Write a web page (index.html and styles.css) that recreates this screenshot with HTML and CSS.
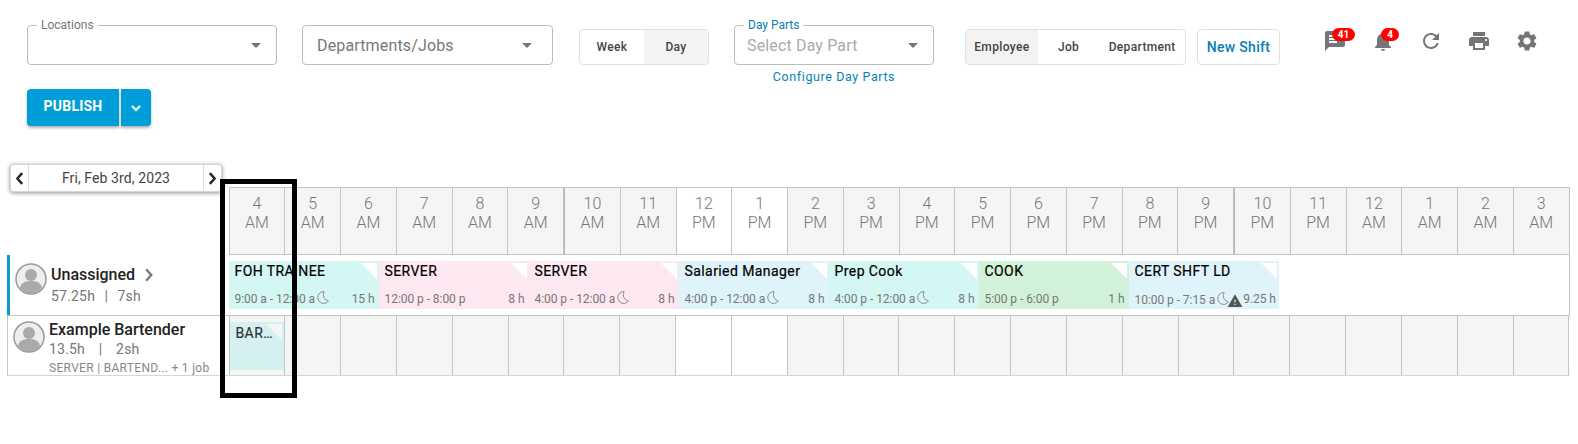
FILE: index.html
```html
<!DOCTYPE html>
<html lang="en">
<head>
<meta charset="utf-8">
<title>Schedule</title>
<link rel="stylesheet" href="styles.css">
</head>
<body>
<div class="page">
  <header class="toolbar">
    <div class="select sel-loc"><span class="legend">Locations</span><span class="caret"></span></div>
    <div class="select sel-dept"><span class="placeholder dark">Departments/Jobs</span><span class="caret"></span></div>
    <div class="seg seg-view"><span class="seg-item wk">Week</span><span class="seg-item on dy">Day</span></div>
    <div class="daypart">
      <div class="select sel-part"><span class="legend blue">Day Parts</span><span class="placeholder">Select Day Part</span><span class="caret"></span></div>
      <a class="config">Configure Day Parts</a>
    </div>
    <div class="seg seg-group"><span class="seg-item on em">Employee</span><span class="seg-item jb">Job</span><span class="seg-item dp">Department</span></div>
    <div class="seg new-shift">New Shift</div>
    <div class="icons">
      <span class="ico"><svg viewBox="0 0 24 24"><path d="M20 2H4c-1.1 0-1.99.9-1.99 2L2 22l4-4h14c1.1 0 2-.9 2-2V4c0-1.1-.9-2-2-2zM6 9h12v2H6V9zm8 5H6v-2h8v2zm4-6H6V6h12v2z"/></svg><b class="badge b-msg">41</b></span>
      <span class="ico"><svg viewBox="0 0 24 24"><path d="M12 22c1.1 0 2-.9 2-2h-4c0 1.1.89 2 2 2zm6-6v-5c0-3.07-1.64-5.64-4.5-6.32V4c0-.83-.67-1.5-1.5-1.5s-1.5.67-1.5 1.5v.68C7.63 5.36 6 7.92 6 11v5l-2 2v1h16v-1l-2-2z"/></svg><b class="badge b-bell">4</b></span>
      <span class="ico"><svg viewBox="0 0 24 24"><path d="M17.65 6.35C16.2 4.9 14.21 4 12 4c-4.42 0-7.99 3.58-7.99 8s3.57 8 7.99 8c3.73 0 6.84-2.55 7.73-6h-2.08c-.82 2.33-3.04 4-5.65 4-3.31 0-6-2.69-6-6s2.69-6 6-6c1.66 0 3.14.69 4.22 1.78L13 11h7V4l-2.35 2.35z"/></svg></span>
      <span class="ico"><svg viewBox="0 0 24 24"><path d="M19 8H5c-1.66 0-3 1.34-3 3v6h4v4h12v-4h4v-6c0-1.66-1.34-3-3-3zm-3 11H8v-5h8v5zm3-7c-.55 0-1-.45-1-1s.45-1 1-1 1 .45 1 1-.45 1-1 1zm-1-9H6v4h12V3z"/></svg></span>
      <span class="ico"><svg viewBox="0 0 24 24"><path d="M19.14 12.94c.04-.3.06-.61.06-.94 0-.32-.02-.64-.07-.94l2.03-1.58c.18-.14.23-.41.12-.61l-1.92-3.32c-.12-.22-.37-.29-.59-.22l-2.39.96c-.5-.38-1.03-.7-1.62-.94l-.36-2.54c-.04-.24-.24-.41-.48-.41h-3.84c-.24 0-.43.17-.47.41l-.36 2.54c-.59.24-1.13.57-1.62.94l-2.39-.96c-.22-.08-.47 0-.59.22L2.74 8.87c-.12.21-.08.47.12.61l2.03 1.58c-.05.3-.09.63-.09.94s.02.64.07.94l-2.03 1.58c-.18.14-.23.41-.12.61l1.92 3.32c.12.22.37.29.59.22l2.39-.96c.5.38 1.03.7 1.62.94l.36 2.54c.05.24.24.41.48.41h3.84c.24 0 .44-.17.47-.41l.36-2.54c.59-.24 1.13-.56 1.62-.94l2.39.96c.22.08.47 0 .59-.22l1.92-3.32c.12-.22.07-.47-.12-.61l-2.01-1.58zM12 15.6c-1.98 0-3.6-1.62-3.6-3.6s1.62-3.6 3.6-3.6 3.6 1.62 3.6 3.6-1.62 3.6-3.6 3.6z"/></svg></span>
    </div>
  </header>

  <div class="publish">
    <button class="pub-main">PUBLISH</button>
    <button class="pub-more"><svg viewBox="0 0 12 12"><path d="M2.500 4.200 6 7.700l3.500-3.500" fill="none" stroke="#fff" stroke-width="1.8"/></svg></button>
  </div>

  <section class="sched">
    <div class="row head">
      <div class="side side-head">
        <div class="datenav">
          <span class="nav-btn"><svg viewBox="0 0 10 14"><path d="M7.500 2 3 7l4.500 5" fill="none" stroke="#222" stroke-width="2.200"/></svg></span>
          <span class="nav-date">Fri, Feb 3rd, 2023</span>
          <span class="nav-btn"><svg viewBox="0 0 10 14"><path d="M2.500 2 7 7l-4.500 5" fill="none" stroke="#222" stroke-width="2.200"/></svg></span>
        </div>
      </div>
      <div class="cells">
        <div class="hc">4<br>AM</div><div class="hc">5<br>AM</div><div class="hc">6<br>AM</div><div class="hc">7<br>AM</div><div class="hc">8<br>AM</div><div class="hc">9<br>AM</div>
        <div class="hc thick">10<br>AM</div><div class="hc">11<br>AM</div><div class="hc open">12<br>PM</div><div class="hc open">1<br>PM</div><div class="hc">2<br>PM</div><div class="hc">3<br>PM</div>
        <div class="hc">4<br>PM</div><div class="hc">5<br>PM</div><div class="hc">6<br>PM</div><div class="hc">7<br>PM</div><div class="hc">8<br>PM</div><div class="hc">9<br>PM</div>
        <div class="hc thick">10<br>PM</div><div class="hc">11<br>PM</div><div class="hc">12<br>AM</div><div class="hc">1<br>AM</div><div class="hc">2<br>AM</div><div class="hc">3<br>AM</div>
      </div>
    </div>

    <div class="row unassigned">
      <div class="side side-un">
        <svg class="avatar" viewBox="0 0 32 32"><circle cx="16" cy="16" r="15" fill="#eee" stroke="#999" stroke-width="1.500"/><circle cx="16" cy="12" r="6" fill="#aaa"/><path d="M5 25c1-6 6-7 11-7s10 1 11 7c-3 3.500-7 5.500-11 5.500S8 28.500 5 25z" fill="#aaa"/></svg>
        <div class="who">
          <div class="name">Unassigned <svg class="chev" viewBox="0 0 10 14"><path d="M2.500 2 7 7l-4.500 5" fill="none" stroke="#777" stroke-width="2"/></svg></div>
          <div class="hours">57.25h &nbsp;|&nbsp; 7sh</div>
        </div>
      </div>
      <div class="shifts">
        <div class="shift teal"><div class="t">FOH TRAINEE</div><div class="m"><span class="time">9:00 a - 12:00 a<svg class="moon" viewBox="0 0 14 14"><path d="M8.500 1.500a5.500 5.500 0 1 0 4 8.800A6 6 0 0 1 8.500 1.500z"/></svg></span><span>15 h</span></div></div>
        <div class="shift pink"><div class="t">SERVER</div><div class="m"><span class="time">12:00 p - 8:00 p</span><span>8 h</span></div></div>
        <div class="shift pink"><div class="t">SERVER</div><div class="m"><span class="time">4:00 p - 12:00 a<svg class="moon" viewBox="0 0 14 14"><path d="M8.500 1.500a5.500 5.500 0 1 0 4 8.800A6 6 0 0 1 8.500 1.500z"/></svg></span><span>8 h</span></div></div>
        <div class="shift blue-s"><div class="t">Salaried Manager</div><div class="m"><span class="time">4:00 p - 12:00 a<svg class="moon" viewBox="0 0 14 14"><path d="M8.500 1.500a5.500 5.500 0 1 0 4 8.800A6 6 0 0 1 8.500 1.500z"/></svg></span><span>8 h</span></div></div>
        <div class="shift teal"><div class="t">Prep Cook</div><div class="m"><span class="time">4:00 p - 12:00 a<svg class="moon" viewBox="0 0 14 14"><path d="M8.500 1.500a5.500 5.500 0 1 0 4 8.800A6 6 0 0 1 8.500 1.500z"/></svg></span><span>8 h</span></div></div>
        <div class="shift green"><div class="t">COOK</div><div class="m"><span class="time">5:00 p - 6:00 p</span><span>1 h</span></div></div>
        <div class="shift blue-s"><div class="t">CERT SHFT LD</div><div class="m"><span class="time">10:00 p - 7:15 a<svg class="moon" viewBox="0 0 14 14"><path d="M8.500 1.500a5.500 5.500 0 1 0 4 8.800A6 6 0 0 1 8.500 1.500z"/></svg><svg class="warn" viewBox="0 0 24 24"><path d="M1 21h22L12 2 1 21zm12-3h-2v-2h2v2zm0-4h-2v-4h2v4z"/></svg></span><span>9.25 h</span></div></div>
      </div>
    </div>

    <div class="row emp">
      <div class="side side-emp">
        <svg class="avatar" viewBox="0 0 32 32"><circle cx="16" cy="16" r="15" fill="#eee" stroke="#999" stroke-width="1.500"/><circle cx="16" cy="12" r="6" fill="#aaa"/><path d="M5 25c1-6 6-7 11-7s10 1 11 7c-3 3.500-7 5.500-11 5.500S8 28.500 5 25z" fill="#aaa"/></svg>
        <div class="who">
          <div class="name">Example Bartender</div>
          <div class="hours">13.5h &nbsp;&nbsp;|&nbsp;&nbsp; 2sh</div>
          <div class="jobs">SERVER | BARTEND... + 1 job</div>
        </div>
      </div>
      <div class="cells">
        <div class="c"><div class="mini"><span>BAR…</span></div></div><div class="c"></div><div class="c"></div><div class="c"></div><div class="c"></div><div class="c"></div>
        <div class="c"></div><div class="c"></div><div class="c open"></div><div class="c open"></div><div class="c"></div><div class="c"></div>
        <div class="c"></div><div class="c"></div><div class="c"></div><div class="c"></div><div class="c"></div><div class="c"></div>
        <div class="c"></div><div class="c"></div><div class="c"></div><div class="c"></div><div class="c"></div><div class="c"></div>
      </div>
    </div>
  </section>
  <div class="annot"></div>
</div>
</body>
</html>
```
FILE: styles.css
```css
* { box-sizing: border-box; }
html, body { margin: 0; padding: 0; background: #fff; }
body { font-family: Roboto, "Liberation Sans", sans-serif; color: #333; overflow: hidden; }
.page { position: relative; width: 1578px; height: 444px; padding-top: 25px; }

.toolbar { display: flex; align-items: flex-start; height: 64px; padding-left: 27px; }
.select { position: relative; display: flex; align-items: center; height: 40px; border: 1px solid #bdbdbd; border-radius: 4px; background: #fff; padding-left: 14px; }
.sel-loc { width: 250px; }
.sel-dept { width: 251px; margin-left: 25px; }
.sel-part { width: 200px; padding-left: 12px; }
.legend { position: absolute; left: 9px; top: -8px; padding: 0 4px; background: #fff; font-size: 12px; line-height: 14px; color: #777; font-weight: 400; }
.legend.blue { color: #0a7fb5; left: 9px; }
.placeholder { font-size: 16px; letter-spacing: .15px; color: #aaa; }
.placeholder.dark { color: #777; }
.caret { position: absolute; right: 15px; top: 17px; width: 0; height: 0; border-left: 5px solid transparent; border-right: 5px solid transparent; border-top: 5px solid #757575; }
.sel-dept .caret { right: 20px; }

.seg { display: flex; height: 36px; margin-top: 4px; border: 1px solid #e0e0e0; border-radius: 4px; overflow: hidden; font-size: 12px; font-weight: 500; letter-spacing: .35px; color: #444; }
.seg-item { display: flex; align-items: center; justify-content: center; }
.seg-item.on { background: #f3f3f3; }
.seg-view { width: 130px; margin-left: 26px; }
.wk { width: 64px; }
.dy { width: 64px; }
.daypart { display: flex; flex-direction: column; align-items: center; width: 200px; margin-left: 25px; }
.config { margin-top: 4px; font-size: 12.500px; line-height: 15px; letter-spacing: .6px; color: #0a7fb5; }
.seg-group { width: 221px; margin-left: 31px; }
.em { width: 72px; }
.jb { width: 62px; }
.dp { width: 86px; }
.new-shift { width: 83px; margin-left: 11px; align-items: center; justify-content: center; font-size: 14px; letter-spacing: .3px; color: #0a7fb5; }

.icons { display: flex; gap: 24px; margin-left: 43px; margin-top: 4px; }
.ico { position: relative; width: 24px; height: 24px; }
.ico svg { display: block; width: 24px; height: 24px; fill: #757575; }
.badge { position: absolute; top: -1px; height: 13px; border-radius: 7px; background: #f00; color: #fff; font-size: 10px; font-weight: 700; line-height: 13px; text-align: center; }
.b-msg { left: 9px; width: 23px; }
.b-bell { left: 10px; width: 18px; }

.publish { display: flex; gap: 2px; padding-left: 27px; height: 37px; }
.publish button { border: 0; border-radius: 0; background: #009ed8; color: #fff; box-shadow: 0 2px 3px rgba(0,0,0,.3); padding: 0; font-family: inherit; }
.pub-main { width: 92px; font-size: 14px; font-weight: 700; letter-spacing: .2px; padding-bottom: 3px !important; border-top-left-radius: 4px !important; border-bottom-left-radius: 4px !important; }
.pub-more { width: 30px; display: flex; align-items: center; justify-content: center; border-top-right-radius: 4px !important; border-bottom-right-radius: 4px !important; }
.pub-more svg { width: 14px; height: 14px; }

.sched { margin: 61px 0 0 7px; width: 1562.500px; }
.row { display: flex; }
.side { position: relative; flex: none; width: 221.500px; }
.cells { display: flex; flex: 1; }
.head { height: 68px; }
.hc { flex: 1 1 0; border: 1px solid #c4c4c4; border-left-width: 0; background: #f5f5f5; text-align: center; padding-top: 6px; font-size: 16px; font-weight: 300; line-height: 19px; color: #777; }
.hc:first-child { border-left-width: 1px; }
.hc.open { background: #fff; }
.hc.thick { border-left: 1px solid #b5b5b5; }
.datenav { position: absolute; left: 3px; top: -23px; display: flex; width: 212px; height: 28px; background: #fff; border: 1px solid #d5d5d5; border-radius: 3px; box-shadow: 0 1px 4px rgba(0,0,0,.45); }
.nav-btn { flex: none; width: 17px; display: flex; align-items: center; justify-content: center; }
.nav-btn svg { width: 11px; height: 15px; }
.nav-date { flex: 1; text-align: center; font-size: 14px; line-height: 26px; letter-spacing: .1px; color: #444; border-left: 1px solid #ddd; border-right: 1px solid #ddd; }

.unassigned { height: 61px; border-bottom: 1px solid #c4c4c4; }
.side-un { display: flex; align-items: flex-start; gap: 4px; padding: 8px 0 0 5px; border-left: 3px solid #0a9bd0; }
.side-un .avatar { width: 32px; height: 32px; flex: none; }
.side-un .who { padding-top: 2px; }
.side-un .hours { word-spacing: 1px; }
.name { display: flex; align-items: center; gap: 8px; font-size: 16px; font-weight: 500; line-height: 19px; color: #222; white-space: nowrap; }
.chev { width: 12px; height: 16px; }
.hours { font-size: 14px; line-height: 17px; letter-spacing: .2px; color: #777; margin-top: 4px; white-space: nowrap; }
.shifts { display: flex; flex: 1; padding: 6px 0 0; border-right: 1px solid #c4c4c4; }
.shift { position: relative; flex: none; width: 150px; height: 48px; padding: 0 4px 0 6px; overflow: hidden; }
.shift::after { content: ""; position: absolute; right: 2px; top: 2px; border-top: 16px solid #fff; border-left: 16px solid transparent; }
.teal { background: #d4f7f4; }
.pink { background: #fde8f2; }
.blue-s { background: #dff3fa; }
.green { background: #d1f2d9; }
.t { font-size: 14px; font-weight: 400; line-height: 16px; letter-spacing: .42px; color: #000; margin-top: 2px; white-space: nowrap; -webkit-text-stroke: .2px #000; }
.m { display: flex; justify-content: space-between; margin-top: 13px; font-size: 12px; line-height: 15px; letter-spacing: -.05px; color: #777; white-space: nowrap; }
.time { display: flex; align-items: center; }
.moon { width: 15px; height: 15px; margin-left: 0; margin-top: -4px; fill: none; stroke: #888; stroke-width: .9; }
.warn { width: 16px; height: 16px; fill: #555; margin: 1px 0 0 -3px; }

.emp { height: 60px; border-bottom: 1px solid #d5d5d5; }
.side-emp { display: flex; gap: 4px; padding: 4px 0 0 5px; border-left: 1px solid #c4c4c4; }
.side-emp .avatar { width: 32px; height: 32px; flex: none; margin-top: 1px; }
.side-emp .hours { margin-top: 2px; word-spacing: .9px; }
.jobs { font-size: 12px; line-height: 12px; letter-spacing: .3px; color: #888; margin-top: 4px; white-space: nowrap; }
.c { flex: 1 1 0; background: #f5f5f5; border-left: 1px solid #c4c4c4; position: relative; }
.c:last-child { border-right: 1px solid #c4c4c4; }
.c.open { background: #fff; }
.mini { position: relative; height: 48px; margin-top: 6px; background: #d4f0f0; padding: 2px 6px; font-size: 14px; font-weight: 400; line-height: 18px; letter-spacing: .4px; color: #333; -webkit-text-stroke: .2px #333; }
.mini::after { content: ""; position: absolute; right: 2px; top: 2px; border-top: 16px solid #f5f5f5; border-left: 16px solid transparent; }

.annot { position: absolute; left: 220px; top: 179px; width: 77px; height: 219px; border: 5px solid #000; pointer-events: none; }
```
